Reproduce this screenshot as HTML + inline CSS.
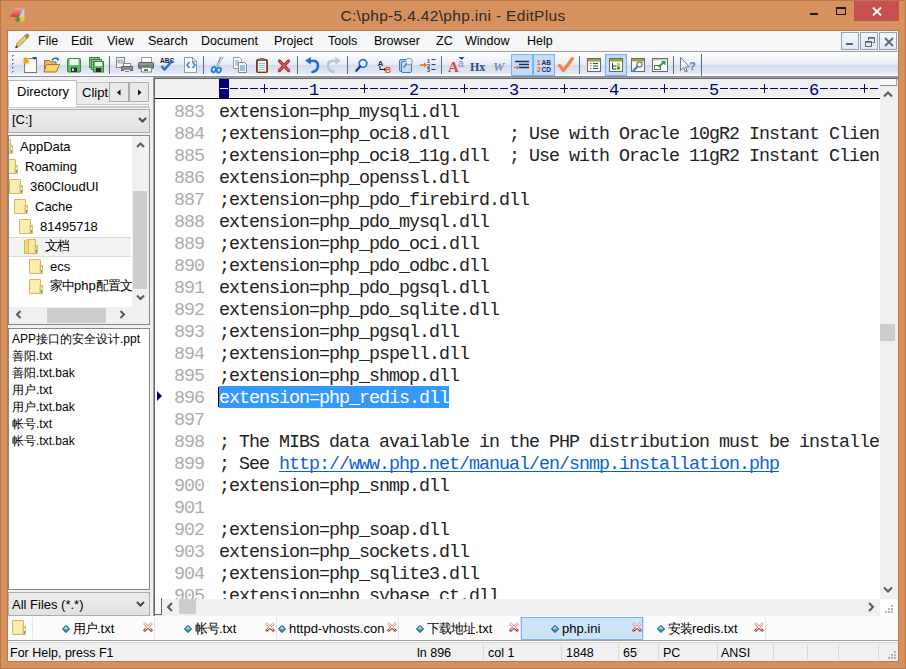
<!DOCTYPE html>
<html><head><meta charset="utf-8">
<style>
*{margin:0;padding:0;box-sizing:border-box}
html,body{width:906px;height:669px;overflow:hidden}
body{position:relative;background:#d6915f;font-family:"Liberation Sans",sans-serif;font-size:12px;color:#000}
.a{position:absolute}
#frame{left:0;top:0;width:906px;height:669px;border:1px solid #b8774a}
#title{left:0;top:1px;width:906px;height:30px;text-align:center;font-size:15.5px;letter-spacing:0.33px;line-height:30px;color:#2b2b2b}
#client{left:7px;top:30px;width:892px;height:632px;background:#f0f0f0;border:1px solid #ba7a4c}
#menubar{left:8px;top:31px;width:890px;height:21px;background:#f5f6f7;border-bottom:1px solid #a0a0a0}
.mdib{top:32px;width:18px;height:18px;background:linear-gradient(#f3f7fb,#dfe9f5);border:1px solid #8fa2b8}
.menu{top:34px;font-size:12.5px;line-height:14px;color:#000}
#toolbar{left:8px;top:52px;width:890px;height:25px;background:linear-gradient(#fdfdfe 0px,#f9fafc 3px,#e7ebf3 12.5px,#d2daeb 13px,#dfe5f3 19px,#e8ecf8 22px,#fafbfe 23px,#fff 24px);border-bottom:1px solid #868fa0}
.sep{top:55px;width:1px;height:20px;background:#a7b1c0;border-right:1px solid #fff}
.ico{top:57px;width:16px;height:16px}
.mono{font-family:"Liberation Mono",monospace}
#editor{left:150px;top:77px;width:748px;height:539px;background:#f0f0f0}
#edframe{left:153px;top:77px;width:745px;height:539px;background:#fff;border-left:1px solid #a0a0a0;border-top:1px solid #a0a0a0;box-shadow:inset 1px 1px 0 #646464}
#ruler{left:155px;top:79px;width:725px;height:20px;background:#f0f0f0;border-bottom:1px solid #000}
#lines{left:155px;top:100px;width:724px;height:499px;overflow:hidden}
.ln{position:absolute;left:0;width:724px;height:22px;line-height:22px;font-family:"Liberation Mono",monospace;font-size:18.33px;letter-spacing:-1px;white-space:pre;color:#222}
.ln span.n{position:absolute;left:19px;top:2px;color:#adadad}
.ln span.t{position:absolute;left:64px;top:2px}
.sel{background:#3399ff;color:#fff;display:inline-block;height:22px;line-height:22px;vertical-align:top;margin-top:-2px;padding-top:2px}
.lnk{color:#0a62d0;text-decoration:underline;text-decoration-skip-ink:none;text-underline-offset:2px;text-decoration-thickness:1px}
#vscroll{left:880px;top:79px;width:18px;height:520px;background:#f0f0f0}
#hscroll{left:155px;top:599px;width:725px;height:17px;background:#f0f0f0}
#leftpanel{left:8px;top:78px;width:144px;height:538px;background:#f0f0f0}
.pt{font-size:13px;line-height:15px;color:#000;white-space:nowrap}
.fl{line-height:17px}
.fold{position:absolute;width:15px;height:14px;background:linear-gradient(90deg,#f7e59a,#f0d570);border:1px solid #d8b850;border-radius:1px}
.tree{font-size:12.5px;line-height:20px;color:#000}
#tabs{left:8px;top:616px;width:890px;height:24px;background:#fcfcfc}
#status{left:8px;top:640px;width:890px;height:21px;background:#f0f0f0;border-top:1px solid #a0a0a0;box-shadow:inset 0 1px 0 #fff,inset 0 2px 0 #dadada}
.st{top:646px;font-size:12.5px;line-height:14px;white-space:nowrap}
.tsep{top:617px;width:1px;height:22px;background:#dde6f0}
.tt{top:620px;font-size:13px;line-height:17px;white-space:nowrap}
.dia{top:625px;width:8px;height:8px}
.tx{top:622px;width:10px;height:10px}
.ss{top:644px;width:1px;height:16px;background:#d9d9d9}
.cj{display:inline-block;width:12px;text-align:center;font-style:normal;overflow:hidden;vertical-align:top}
</style></head><body>
<div class="a" id="frame"></div>
<div class="a" id="title">C:\php-5.4.42\php.ini - EditPlus</div>
<div class="a" id="client"></div>
<svg class="a" style="left:9px;top:6px" width="18" height="18" viewBox="0 0 18 18">
 <defs><linearGradient id="rg" x1="0" y1="0" x2="0" y2="1"><stop offset="0" stop-color="#f4a8a4"/><stop offset="1" stop-color="#dc2c2c"/></linearGradient></defs>
 <path d="M7 1.5 L14 2.5 L10 11.5 L1 10.5 Z" fill="url(#rg)"/>
 <path d="M14 2.5 L15.5 3 L15.5 11.5 L10 11.5 Z" fill="#b8d4ea"/>
 <path d="M6 13.5h5M8.5 11v5" stroke="#28a428" stroke-width="1.8"/>
 <path d="M11 13.5h5M13.5 11v5" stroke="#e6d020" stroke-width="1.8"/>
</svg>
<div class="a" style="left:810px;top:13px;width:8px;height:2px;background:#1a1a1a"></div>
<div class="a" style="left:836px;top:7px;width:10px;height:8px;border:1px solid #1a1a1a;border-top-width:2px"></div>
<div class="a" style="left:854px;top:1px;width:45px;height:20px;background:#c75050"></div>
<svg class="a" style="left:872px;top:7px" width="10" height="9" viewBox="0 0 10 9"><path d="M1 0.5 L9 8.5 M9 0.5 L1 8.5" stroke="#fff" stroke-width="1.9"/></svg>

<div class="a" id="menubar"></div>
<svg class="a" style="left:13px;top:32px" width="18" height="18" viewBox="0 0 18 18">
 <path d="M2.5 16 L4 11.5 L13 2.5 L15.5 5 L6.5 14 Z" fill="#f2cf6a" stroke="#8a6a2a" stroke-width="0.8"/>
 <path d="M13 2.5 L14.2 1.3 L16.7 3.8 L15.5 5 Z" fill="#d85a5a"/>
 <path d="M12 3.5 L14.5 6" stroke="#3c9a4c" stroke-width="1.2"/>
 <path d="M2.5 16 L3.3 13.7 L4.8 15.2 Z" fill="#222"/>
</svg>
<div class="a mdib" style="left:841px"><div style="position:absolute;left:4px;top:10px;width:7px;height:2px;background:#5a6878"></div></div>
<div class="a mdib" style="left:860px"><svg style="position:absolute;left:4px;top:4px" width="10" height="10" viewBox="0 0 10 10"><path d="M3.5 0.5h6v5h-2M0.5 4.5h6v5h-6z M3.5 0.5v3" fill="none" stroke="#5a6878" stroke-width="1"/><path d="M3 1h6.5M0 5h7" stroke="#5a6878" stroke-width="1.5"/></svg></div>
<div class="a mdib" style="left:879px"><svg style="position:absolute;left:4px;top:4px" width="10" height="10" viewBox="0 0 10 10"><path d="M1 1L9 9M9 1L1 9" stroke="#5a6878" stroke-width="1.8"/></svg></div>

<div class="a menu" style="left:38px">File</div>
<div class="a menu" style="left:71px">Edit</div>
<div class="a menu" style="left:107px">View</div>
<div class="a menu" style="left:148px">Search</div>
<div class="a menu" style="left:201px">Document</div>
<div class="a menu" style="left:274px">Project</div>
<div class="a menu" style="left:328px">Tools</div>
<div class="a menu" style="left:374px">Browser</div>
<div class="a menu" style="left:436px">ZC</div>
<div class="a menu" style="left:465px">Window</div>
<div class="a menu" style="left:527px">Help</div>
<div class="a" id="toolbar"></div>
<svg class="a" style="left:8px;top:52px" width="890" height="25" viewBox="8 52 890 25">
<!-- gripper -->
<g fill="#7d8ca3"><rect x="12" y="55" width="2" height="2"/><rect x="12" y="59" width="2" height="2"/><rect x="12" y="63" width="2" height="2"/><rect x="12" y="67" width="2" height="2"/><rect x="12" y="71" width="2" height="2"/></g>
<g fill="#fff"><rect x="13" y="56" width="1" height="1"/><rect x="13" y="60" width="1" height="1"/><rect x="13" y="64" width="1" height="1"/><rect x="13" y="68" width="1" height="1"/><rect x="13" y="72" width="1" height="1"/></g>
<!-- separators -->
<g fill="#5f6b7b"><rect x="109" y="56" width="1" height="18"/><rect x="203" y="56" width="1" height="18"/><rect x="297" y="56" width="1" height="18"/><rect x="347" y="56" width="1" height="18"/><rect x="441" y="56" width="1" height="18"/><rect x="579" y="56" width="1" height="18"/><rect x="673" y="56" width="1" height="18"/><rect x="701" y="54" width="1" height="22"/></g>
<!-- new -->
<rect x="24.5" y="58.5" width="12" height="14" fill="#f8f8f6" stroke="#7b7b7b"/>
<path d="M32 57h5l-2.5 3z" fill="#2b4a80"/>
<circle cx="26" cy="61" r="2.6" fill="#f7a81b"/><path d="M26 56.5v9M21.5 61h9M22.8 57.8l6.4 6.4M29.2 57.8l-6.4 6.4" stroke="#f9c64a" stroke-width="1"/>
<circle cx="26" cy="61" r="2" fill="#f39c12"/>
<!-- open -->
<path d="M44.5 60.5h5l1.5 1.5h5v9.5h-11.5z" fill="#e5bd55" stroke="#8f7030"/>
<path d="M46.5 64.5h13l-3 7.5h-12.5z" fill="#f8d26a" stroke="#9a7a38"/>
<path d="M52 60.5c1-2.5 4.5-3 6.5-1" stroke="#2c6fc0" stroke-width="1.6" fill="none"/><path d="M57 57.5l2.5 2-2.5 1.5z" fill="#2c6fc0"/>
<!-- save -->
<rect x="67.5" y="58.5" width="13" height="13.5" rx="1" fill="#62b862" stroke="#3a8a3a"/>
<rect x="69.5" y="59" width="9" height="6" fill="#f2f8f0"/>
<rect x="71" y="67.5" width="6" height="4.5" fill="#2b2b2b"/><rect x="72" y="68.5" width="2" height="2.5" fill="#ddd"/>
<!-- save all -->
<rect x="89.5" y="57.5" width="10" height="10" fill="#7cc67c" stroke="#3a8a3a"/>
<rect x="91.5" y="59.5" width="10" height="10" fill="#7cc67c" stroke="#3a8a3a"/>
<rect x="93.5" y="61.5" width="10" height="10.5" fill="#62b862" stroke="#3a8a3a"/>
<rect x="95" y="62" width="7" height="4" fill="#f2f8f0"/><rect x="96" y="68" width="5" height="4" fill="#2b2b2b"/>
<!-- print preview -->
<rect x="116.5" y="57.5" width="8" height="10" fill="#f5f5f5" stroke="#888"/>
<rect x="118" y="60" width="5" height="3" fill="#bcd3ea" stroke="#777" stroke-width="0.5"/>
<rect x="123.5" y="63.5" width="7" height="4" fill="#fff" stroke="#888"/>
<rect x="121.5" y="66.5" width="11" height="4" fill="#8a8a8a" stroke="#666"/>
<rect x="124" y="70" width="6" height="2.5" fill="#eee"/><rect x="125" y="71" width="4" height="1" fill="#3a8"/>
<!-- print -->
<rect x="141.5" y="57.5" width="10" height="5" fill="#fff" stroke="#999"/>
<rect x="138.5" y="62.5" width="15" height="6" rx="1" fill="#7a7a7a" stroke="#5a5a5a"/>
<rect x="139" y="63" width="14" height="2" fill="#999"/>
<rect x="141.5" y="67.5" width="10" height="4.5" fill="#fafafa" stroke="#888"/>
<rect x="144" y="69" width="4" height="2" fill="#2e9a5e"/><rect x="151" y="64" width="1.5" height="1.5" fill="#4c4"/>
<!-- spell ABC -->
<text x="160" y="62.5" font-family="Liberation Sans" font-size="6.5" font-weight="bold" fill="#222">ABC</text>
<path d="M161.5 66l3 3.5 8-9" stroke="#2a6fd0" stroke-width="2.6" fill="none" stroke-linejoin="round"/>
<!-- html -->
<path d="M184.5 57.5h8l4 4v11h-12z" fill="#fbfbfb" stroke="#999"/>
<path d="M192.5 57.5v4h4" fill="none" stroke="#999"/>
<path d="M189.5 62l-2.5 3 2.5 3M192.5 62l2.5 3-2.5 3" stroke="#2f8fe0" stroke-width="1.7" fill="none"/>
<!-- cut -->
<path d="M223 57.5l-6 8.5M220.5 57l-3.5 9" stroke="#8794a2" stroke-width="1.3"/>
<path d="M222 58.5l-4.5 6.5" stroke="#d8dee6" stroke-width="0.8"/>
<ellipse cx="213.8" cy="69.5" rx="2" ry="2.8" fill="none" stroke="#1f80dc" stroke-width="1.8" transform="rotate(20 213.8 69.5)"/>
<ellipse cx="218.8" cy="70" rx="2" ry="2.6" fill="none" stroke="#1f80dc" stroke-width="1.8" transform="rotate(20 218.8 70)"/>
<!-- copy -->
<path d="M233.5 57.5h6l2 2v9h-8z" fill="#fafafa" stroke="#999"/>
<path d="M235 61h4M235 63h4M235 65h4" stroke="#6b9bd0"/>
<path d="M238.5 62.5h6l2 2v8h-8z" fill="#fafafa" stroke="#888"/>
<path d="M240 66h5M240 68h5M240 70h5" stroke="#3c7fd0"/>
<!-- paste -->
<rect x="256.5" y="59.5" width="11" height="13" rx="1" fill="#8b5a2b" stroke="#6a4220"/>
<rect x="258" y="61" width="8" height="10.5" fill="#f5f8fb"/>
<path d="M259 63.5h6M259 65.5h6M259 67.5h6M259 69.5h6" stroke="#8fb6de"/>
<rect x="259.5" y="58" width="5" height="2.5" fill="#777"/>
<!-- delete -->
<path d="M279.5 61l9 9.5M288.5 61l-9 9.5" stroke="#8e1a1a" stroke-width="3.2" stroke-linecap="round"/>
<path d="M279.5 61l9 9.5M288.5 61l-9 9.5" stroke="#e05555" stroke-width="1.8" stroke-linecap="round"/>
<!-- undo -->
<path d="M309.5 61.5c5-2 8.5 0 8.5 4s-3 6-5.5 6.5" stroke="#1b72cf" stroke-width="2.6" fill="none" stroke-linecap="round"/>
<path d="M305 60.5l6-3.5-0.5 7.5z" fill="#1b72cf"/>
<!-- redo -->
<path d="M336.5 61.5c-5-2-8.5 0-8.5 4s3 6 5.5 6.5" stroke="#b9c7d3" stroke-width="2.6" fill="none" stroke-linecap="round"/>
<path d="M341 60.5l-6-3.5 0.5 7.5z" fill="#b9c7d3"/>
<!-- find -->
<circle cx="363" cy="63.5" r="3.8" fill="#eaf4fc" stroke="#2775d0" stroke-width="1.8"/>
<path d="M360.3 66.3l-4 4.5" stroke="#1a3c7a" stroke-width="2.2" stroke-linecap="round"/>
<!-- replace -->
<text x="377.5" y="65.5" font-family="Liberation Sans" font-size="8" font-weight="bold" fill="#1a2f6a">A</text>
<path d="M380 66v3.5h4.5" stroke="#111" stroke-width="1" fill="none"/><path d="M384 68l2 1.5-2 1.5z" fill="#111"/>
<text x="385" y="72.5" font-family="Liberation Sans" font-size="8.5" font-weight="bold" fill="#f04e10">B</text>
<!-- find in files -->
<rect x="399.5" y="59.5" width="10" height="12" rx="1.5" fill="#a8cdf0" stroke="#3a7bc8"/>
<rect x="401.5" y="61.5" width="10" height="11" rx="1.5" fill="#c4ddf5" stroke="#3a7bc8"/>
<circle cx="409" cy="61.5" r="3.3" fill="#eef6fd" stroke="#8a9aaa" stroke-width="1"/>
<path d="M406.5 64l-3 3.5" stroke="#777" stroke-width="1.6"/>
<!-- goto -->
<path d="M420 65h5" stroke="#ee6a25" stroke-width="1.6"/><path d="M424 62.5l3 2.5-3 2.5z" fill="#ee6a25"/>
<text x="427" y="63" font-family="Liberation Sans" font-size="5.5" font-weight="bold" fill="#243c8a">1</text>
<text x="427" y="67.5" font-family="Liberation Sans" font-size="5.5" font-weight="bold" fill="#243c8a">2</text>
<text x="427" y="72" font-family="Liberation Sans" font-size="5.5" font-weight="bold" fill="#243c8a">3</text>
<path d="M431.5 59.5h4M431.5 64.5h4M431.5 69.5h4" stroke="#243c8a" stroke-width="1.2"/>
<!-- font -->
<text x="448" y="72" font-family="Liberation Serif" font-size="15" font-weight="bold" fill="#d24a4a">A</text>
<text x="458" y="67" font-family="Liberation Sans" font-size="10" fill="#8a7ad0">a</text>
<path d="M458.5 57h6l-3 3z" fill="#3a4a6a"/>
<!-- Hx -->
<text x="470" y="71" font-family="Liberation Serif" font-size="12" font-weight="bold" fill="#2f4a7a">Hx</text>
<!-- W -->
<text x="493" y="71" font-family="Liberation Serif" font-size="13" font-weight="bold" font-style="italic" fill="#7e90a8">W</text>
<!-- pressed buttons -->
<rect x="511.5" y="54.5" width="21" height="21" fill="#c4dcf6" stroke="#7fb2ea"/>
<rect x="533.5" y="54.5" width="21" height="21" fill="#c4dcf6" stroke="#7fb2ea"/>
<path d="M515 61.5h14M519 64.5h10M519 67.5h10" stroke="#1e2f5a" stroke-width="1.3"/>
<path d="M514 67.5h4" stroke="#ee6a25" stroke-width="1.3"/><path d="M517 65.5l2.5 2-2.5 2z" fill="#ee6a25"/>
<text x="537" y="64.5" font-family="Liberation Sans" font-size="6.5" font-weight="bold" fill="#f05a20">1</text>
<text x="537" y="72" font-family="Liberation Sans" font-size="6.5" font-weight="bold" fill="#f05a20">2</text>
<text x="541.5" y="64.5" font-family="Liberation Sans" font-size="6.5" font-weight="bold" fill="#1e2f5a">AB</text>
<text x="541.5" y="72" font-family="Liberation Sans" font-size="6.5" font-weight="bold" fill="#1e2f5a">CD</text>
<!-- check -->
<path d="M559.5 65.5l4 5 9-12" stroke="#f0823a" stroke-width="3" fill="none" stroke-linecap="round" stroke-linejoin="round"/>
<!-- window icons -->
<rect x="587.5" y="58.5" width="13" height="13" fill="#fbfbfb" stroke="#6a6a6a"/><rect x="588" y="59" width="12" height="2.5" fill="#9aa53a"/>
<path d="M590 63.5h1.5M590 66h1.5M590 68.5h1.5" stroke="#e04a2a" stroke-width="1.2"/><path d="M593 63.5h5M593 66h5M593 68.5h5" stroke="#3a4a6a" stroke-width="1"/>
<rect x="605.5" y="54.5" width="21" height="21" fill="#c4dcf6" stroke="#7fb2ea"/>
<rect x="609.5" y="58.5" width="13" height="13" fill="#fbfbfb" stroke="#6a6a6a"/><rect x="610" y="59" width="12" height="2.5" fill="#9aa53a"/>
<path d="M612.5 63v6h4M612.5 66h4" stroke="#333" fill="none"/><rect x="617" y="63" width="3" height="3" fill="#d8d020"/><rect x="617" y="66.5" width="3" height="3" fill="#2aa04a"/>
<rect x="631.5" y="58.5" width="13" height="13" fill="#fbfbfb" stroke="#6a6a6a"/><rect x="632" y="59" width="12" height="2.5" fill="#9aa53a"/>
<path d="M633 71l5-5" stroke="#3b82d8" stroke-width="2.4"/><circle cx="639.5" cy="64.5" r="2.5" fill="none" stroke="#888" stroke-width="1.5"/>
<rect x="652.5" y="58.5" width="15" height="13" fill="#fbfbfb" stroke="#6a6a6a"/><rect x="653" y="59" width="14" height="1.5" fill="#c8c8c8"/>
<rect x="654.5" y="65.5" width="6" height="4" fill="none" stroke="#666"/>
<path d="M658.5 67l5.5-5" stroke="#22a04a" stroke-width="2"/><path d="M661 61h4.5v4.5z" fill="#22a04a"/>
<!-- help -->
<path d="M680.5 57.5v13l3-3 2 4.5 1.8-.8-2-4.3h4z" fill="#f4f6f8" stroke="#6e7a88"/>
<text x="689" y="70" font-family="Liberation Sans" font-size="11" font-weight="bold" fill="#4a7ac8">?</text>
</svg>

<div class="a" id="leftpanel"></div>
<div class="a" style="left:8px;top:80px;width:69px;height:27px;background:#fff;border:1px solid #b9b9b9;border-bottom:none"></div>
<div class="a pt" style="left:17px;top:84px;">Directory</div>
<div class="a" style="left:76px;top:82px;width:33px;height:23px;background:#ebebeb;border-top:1px solid #c4c4c4;border-left:1px solid #c4c4c4;overflow:hidden"><div class="pt" style="position:absolute;left:5px;top:2px">Clipt<span style="color:#aaa">e</span></div></div>
<div class="a" style="left:109px;top:82px;width:20px;height:20px;background:#e8e8e8;border:1px solid #adadad"><svg style="position:absolute;left:6px;top:6px" width="6" height="7"><path d="M4.5 0.5 L1 3.5 L4.5 6.5Z" fill="#111"/></svg></div>
<div class="a" style="left:129px;top:82px;width:20px;height:20px;background:#e8e8e8;border:1px solid #adadad"><svg style="position:absolute;left:7px;top:6px" width="6" height="7"><path d="M1 0.5 L4.5 3.5 L1 6.5Z" fill="#111"/></svg></div>
<div class="a" style="left:76px;top:104px;width:73px;height:3px;border:1px solid #c8c8c8;border-left:none;background:#fafafa"></div>
<div class="a" style="left:8px;top:107px;width:142px;height:1px;background:#d0d0d0"></div>
<div class="a" style="left:8px;top:109px;width:142px;height:24px;background:linear-gradient(#ececec,#e2e2e2);border:1px solid #adadad"></div>
<div class="a pt" style="left:12px;top:112px">[C:]</div>
<svg class="a" style="left:138px;top:117px" width="9" height="6"><path d="M1 1 L4.5 4.5 L8 1" fill="none" stroke="#4a4a4a" stroke-width="2"/></svg>
<div class="a" style="left:8px;top:135px;width:142px;height:190px;background:#fff;border:1px solid #828790"></div>
<div class="a" style="left:132px;top:136px;width:17px;height:188px;background:#f0f0f0"></div>
<div class="a" style="left:133px;top:191px;width:14px;height:98px;background:#cdcdcd"></div>
<svg class="a" style="left:136px;top:142px" width="9" height="6"><path d="M1 5 L4.5 1.5 L8 5" fill="none" stroke="#5a5a5a" stroke-width="2"/></svg>
<svg class="a" style="left:136px;top:294px" width="9" height="7"><path d="M1 1.5 L4.5 5 L8 1.5" fill="none" stroke="#5a5a5a" stroke-width="2"/></svg>
<div class="a" style="left:9px;top:307px;width:123px;height:17px;background:#f0f0f0"></div>
<div class="a" style="left:47px;top:308px;width:59px;height:15px;background:#cdcdcd"></div>
<svg class="a" style="left:15px;top:310px" width="7" height="9"><path d="M5.5 1 L2 4.5 L5.5 8" fill="none" stroke="#5a5a5a" stroke-width="2"/></svg>
<svg class="a" style="left:119px;top:310px" width="7" height="9"><path d="M1.5 1 L5 4.5 L1.5 8" fill="none" stroke="#5a5a5a" stroke-width="2"/></svg>
<div class="a" style="left:9px;top:237px;width:122px;height:20px;background:#f3f3f3;border-top:1px solid #dcdcdc;border-bottom:1px solid #dcdcdc"></div>
<div class="a" style="left:9px;top:136px;width:123px;height:171px;overflow:hidden">
 <svg class="a" style="left:-10px;top:3px" width="14" height="15" viewBox="0 0 14 15"><rect x="0.5" y="0.5" width="11" height="14" rx="0.5" fill="#f8e8a2" stroke="#d9b65c"/><rect x="1.5" y="1.5" width="9" height="12" fill="#f9eeb0"/><rect x="11" y="6.5" width="2.5" height="8" fill="#ecc860" stroke="#d9b65c" stroke-width="0.8"/><rect x="12" y="8.5" width="1" height="2.5" fill="#fff"/><rect x="12" y="11" width="1" height="2.5" fill="#3596e0"/></svg><div class="a pt" style="left:11px;top:3px">AppData</div>
 <svg class="a" style="left:-5px;top:23px" width="14" height="15" viewBox="0 0 14 15"><rect x="0.5" y="0.5" width="11" height="14" rx="0.5" fill="#f8e8a2" stroke="#d9b65c"/><rect x="1.5" y="1.5" width="9" height="12" fill="#f9eeb0"/><rect x="11" y="6.5" width="2.5" height="8" fill="#ecc860" stroke="#d9b65c" stroke-width="0.8"/><rect x="12" y="8.5" width="1" height="2.5" fill="#fff"/><rect x="12" y="11" width="1" height="2.5" fill="#3596e0"/></svg><div class="a pt" style="left:16px;top:23px">Roaming</div>
 <svg class="a" style="left:0px;top:43px" width="14" height="15" viewBox="0 0 14 15"><rect x="0.5" y="0.5" width="11" height="14" rx="0.5" fill="#f8e8a2" stroke="#d9b65c"/><rect x="1.5" y="1.5" width="9" height="12" fill="#f9eeb0"/><rect x="11" y="6.5" width="2.5" height="8" fill="#ecc860" stroke="#d9b65c" stroke-width="0.8"/><rect x="12" y="8.5" width="1" height="2.5" fill="#fff"/><rect x="12" y="11" width="1" height="2.5" fill="#3596e0"/></svg><div class="a pt" style="left:21px;top:43px">360CloudUI</div>
 <svg class="a" style="left:5px;top:63px" width="14" height="15" viewBox="0 0 14 15"><rect x="0.5" y="0.5" width="11" height="14" rx="0.5" fill="#f8e8a2" stroke="#d9b65c"/><rect x="1.5" y="1.5" width="9" height="12" fill="#f9eeb0"/><rect x="11" y="6.5" width="2.5" height="8" fill="#ecc860" stroke="#d9b65c" stroke-width="0.8"/><rect x="12" y="8.5" width="1" height="2.5" fill="#fff"/><rect x="12" y="11" width="1" height="2.5" fill="#3596e0"/></svg><div class="a pt" style="left:26px;top:63px">Cache</div>
 <svg class="a" style="left:10px;top:83px" width="14" height="15" viewBox="0 0 14 15"><rect x="0.5" y="0.5" width="11" height="14" rx="0.5" fill="#f8e8a2" stroke="#d9b65c"/><rect x="1.5" y="1.5" width="9" height="12" fill="#f9eeb0"/><rect x="11" y="6.5" width="2.5" height="8" fill="#ecc860" stroke="#d9b65c" stroke-width="0.8"/><rect x="12" y="8.5" width="1" height="2.5" fill="#fff"/><rect x="12" y="11" width="1" height="2.5" fill="#3596e0"/></svg><div class="a pt" style="left:31px;top:83px">81495718</div>
 <svg class="a" style="left:15px;top:103px" width="14" height="15" viewBox="0 0 14 15"><path d="M0.5 1.5 L5.5 0.5 V14.5 H0.5Z" fill="#f3dc80" stroke="#d9b65c"/><rect x="4.5" y="0.5" width="7" height="14" fill="#f8e8a2" stroke="#d9b65c"/><rect x="11" y="6.5" width="2.5" height="8" fill="#ecc860" stroke="#d9b65c" stroke-width="0.8"/><rect x="12" y="11" width="1" height="2.5" fill="#3596e0"/></svg><div class="a pt" style="left:36px;top:102px"><i class="cj">文</i><i class="cj">档</i></div>
 <svg class="a" style="left:20px;top:123px" width="14" height="15" viewBox="0 0 14 15"><rect x="0.5" y="0.5" width="11" height="14" rx="0.5" fill="#f8e8a2" stroke="#d9b65c"/><rect x="1.5" y="1.5" width="9" height="12" fill="#f9eeb0"/><rect x="11" y="6.5" width="2.5" height="8" fill="#ecc860" stroke="#d9b65c" stroke-width="0.8"/><rect x="12" y="8.5" width="1" height="2.5" fill="#fff"/><rect x="12" y="11" width="1" height="2.5" fill="#3596e0"/></svg><div class="a pt" style="left:41px;top:123px">ecs</div>
 <svg class="a" style="left:20px;top:143px" width="14" height="15" viewBox="0 0 14 15"><rect x="0.5" y="0.5" width="11" height="14" rx="0.5" fill="#f8e8a2" stroke="#d9b65c"/><rect x="1.5" y="1.5" width="9" height="12" fill="#f9eeb0"/><rect x="11" y="6.5" width="2.5" height="8" fill="#ecc860" stroke="#d9b65c" stroke-width="0.8"/><rect x="12" y="8.5" width="1" height="2.5" fill="#fff"/><rect x="12" y="11" width="1" height="2.5" fill="#3596e0"/></svg><div class="a pt" style="left:41px;top:142px;white-space:nowrap"><i class="cj">家</i><i class="cj">中</i>php<i class="cj">配</i><i class="cj">置</i><i class="cj">文</i><i class="cj">件</i></div>
</div>
<div class="a" style="left:8px;top:328px;width:142px;height:262px;background:#fff;border:1px solid #828790"></div>
<div class="a pt fl" style="left:12px;top:331px;font-size:12px">APP<i class="cj">接</i><i class="cj">口</i><i class="cj">的</i><i class="cj">安</i><i class="cj">全</i><i class="cj">设</i><i class="cj">计</i>.ppt<br><i class="cj">善</i><i class="cj">阳</i>.txt<br><i class="cj">善</i><i class="cj">阳</i>.txt.bak<br><i class="cj">用</i><i class="cj">户</i>.txt<br><i class="cj">用</i><i class="cj">户</i>.txt.bak<br><i class="cj">帐</i><i class="cj">号</i>.txt<br><i class="cj">帐</i><i class="cj">号</i>.txt.bak</div>
<div class="a" style="left:8px;top:592px;width:142px;height:24px;background:linear-gradient(#ececec,#e2e2e2);border:1px solid #adadad"></div>
<div class="a pt" style="left:12px;top:597px">All Files (*.*)</div>
<svg class="a" style="left:136px;top:601px" width="9" height="6"><path d="M1 1 L4.5 4.5 L8 1" fill="none" stroke="#4a4a4a" stroke-width="2"/></svg>

<div class="a" id="editor"></div><div class="a" id="edframe"></div>
<div class="a" id="ruler"></div><svg class="a" style="left:155px;top:79px" width="725" height="19" viewBox="155 79 725 19"><rect x="155" y="97" width="725" height="1" fill="#fff"/><rect x="219" y="79" width="10" height="19" fill="#000080"/><rect x="220" y="88" width="8" height="1" fill="#fff"/><path d="M230 88.5h8M240 88.5h8M250 88.5h8M260 88.5h8M264.5 84v9M270 88.5h8M280 88.5h8M290 88.5h8M300 88.5h8M320 88.5h8M330 88.5h8M340 88.5h8M350 88.5h8M360 88.5h8M364.5 84v9M370 88.5h8M380 88.5h8M390 88.5h8M400 88.5h8M420 88.5h8M430 88.5h8M440 88.5h8M450 88.5h8M460 88.5h8M464.5 84v9M470 88.5h8M480 88.5h8M490 88.5h8M500 88.5h8M520 88.5h8M530 88.5h8M540 88.5h8M550 88.5h8M560 88.5h8M564.5 84v9M570 88.5h8M580 88.5h8M590 88.5h8M600 88.5h8M620 88.5h8M630 88.5h8M640 88.5h8M650 88.5h8M660 88.5h8M664.5 84v9M670 88.5h8M680 88.5h8M690 88.5h8M700 88.5h8M720 88.5h8M730 88.5h8M740 88.5h8M750 88.5h8M760 88.5h8M764.5 84v9M770 88.5h8M780 88.5h8M790 88.5h8M800 88.5h8M820 88.5h8M830 88.5h8M840 88.5h8M850 88.5h8M860 88.5h8M864.5 84v9M870 88.5h8M880 88.5h8" stroke="#000080" stroke-width="1" fill="none" shape-rendering="crispEdges"/><text x="314" y="95" font-family="Liberation Mono" font-size="17" fill="#000080" text-anchor="middle">1</text><text x="414" y="95" font-family="Liberation Mono" font-size="17" fill="#000080" text-anchor="middle">2</text><text x="514" y="95" font-family="Liberation Mono" font-size="17" fill="#000080" text-anchor="middle">3</text><text x="614" y="95" font-family="Liberation Mono" font-size="17" fill="#000080" text-anchor="middle">4</text><text x="714" y="95" font-family="Liberation Mono" font-size="17" fill="#000080" text-anchor="middle">5</text><text x="814" y="95" font-family="Liberation Mono" font-size="17" fill="#000080" text-anchor="middle">6</text></svg>
<div class="a" id="lines">
<div class="ln" style="top:0px"><span class="n">883</span><span class="t">extension=php_mysqli.dll</span></div>
<div class="ln" style="top:22px"><span class="n">884</span><span class="t">;extension=php_oci8.dll      ; Use with Oracle 10gR2 Instant Client</span></div>
<div class="ln" style="top:44px"><span class="n">885</span><span class="t">;extension=php_oci8_11g.dll  ; Use with Oracle 11gR2 Instant Client</span></div>
<div class="ln" style="top:66px"><span class="n">886</span><span class="t">extension=php_openssl.dll</span></div>
<div class="ln" style="top:88px"><span class="n">887</span><span class="t">;extension=php_pdo_firebird.dll</span></div>
<div class="ln" style="top:110px"><span class="n">888</span><span class="t">extension=php_pdo_mysql.dll</span></div>
<div class="ln" style="top:132px"><span class="n">889</span><span class="t">;extension=php_pdo_oci.dll</span></div>
<div class="ln" style="top:154px"><span class="n">890</span><span class="t">;extension=php_pdo_odbc.dll</span></div>
<div class="ln" style="top:176px"><span class="n">891</span><span class="t">extension=php_pdo_pgsql.dll</span></div>
<div class="ln" style="top:198px"><span class="n">892</span><span class="t">extension=php_pdo_sqlite.dll</span></div>
<div class="ln" style="top:220px"><span class="n">893</span><span class="t">;extension=php_pgsql.dll</span></div>
<div class="ln" style="top:242px"><span class="n">894</span><span class="t">;extension=php_pspell.dll</span></div>
<div class="ln" style="top:264px"><span class="n">895</span><span class="t">;extension=php_shmop.dll</span></div>
<div class="ln" style="top:286px"><span class="n">896</span><span class="t"><span class="sel">extension=php_redis.dll</span></span></div>
<div class="ln" style="top:308px"><span class="n">897</span><span class="t"></span></div>
<div class="ln" style="top:330px"><span class="n">898</span><span class="t">; The MIBS data available in the PHP distribution must be installed.</span></div>
<div class="ln" style="top:352px"><span class="n">899</span><span class="t">; See <span class="lnk">http://www.php.net/manual/en/snmp.installation.php</span></span></div>
<div class="ln" style="top:374px"><span class="n">900</span><span class="t">;extension=php_snmp.dll</span></div>
<div class="ln" style="top:396px"><span class="n">901</span><span class="t"></span></div>
<div class="ln" style="top:418px"><span class="n">902</span><span class="t">;extension=php_soap.dll</span></div>
<div class="ln" style="top:440px"><span class="n">903</span><span class="t">extension=php_sockets.dll</span></div>
<div class="ln" style="top:462px"><span class="n">904</span><span class="t">;extension=php_sqlite3.dll</span></div>
<div class="ln" style="top:484px"><span class="n">905</span><span class="t">;extension=php_sybase_ct.dll</span></div>
</div>
<div class="a" id="vscroll"></div>
<div class="a" id="hscroll"></div>
<div class="a" style="left:880px;top:79px;width:17px;height:7px;background:#f8f8f8;border-right:1px solid #a0a0a0;border-bottom:1px solid #8a8a8a"></div>
<svg class="a" style="left:883px;top:91px" width="10" height="7"><path d="M1 5.5 L5 1.5 L9 5.5" fill="none" stroke="#5a5a5a" stroke-width="2"/></svg>
<div class="a" style="left:880px;top:324px;width:15px;height:17px;background:#cdcdcd"></div>
<svg class="a" style="left:883px;top:586px" width="10" height="7"><path d="M1 1.5 L5 5.5 L9 1.5" fill="none" stroke="#5a5a5a" stroke-width="2"/></svg>
<div class="a" style="left:155px;top:598px;width:7px;height:17px;background:#fafafa;border-right:1px solid #696969;border-bottom:1px solid #696969"></div>
<svg class="a" style="left:166px;top:602px" width="8" height="10"><path d="M6 1 L2 5 L6 9" fill="none" stroke="#5a5a5a" stroke-width="2"/></svg>
<div class="a" style="left:179px;top:599px;width:17px;height:15px;background:#cdcdcd"></div>
<svg class="a" style="left:867px;top:602px" width="8" height="10"><path d="M2 1 L6 5 L2 9" fill="none" stroke="#5a5a5a" stroke-width="2"/></svg>
<svg class="a" style="left:885px;top:604px" width="12" height="12"><g fill="#b5b5b5"><rect x="6" y="1" width="2" height="2"/><rect x="3" y="4" width="2" height="2"/><rect x="6" y="4" width="2" height="2"/><rect x="0" y="7" width="2" height="2"/><rect x="3" y="7" width="2" height="2"/><rect x="6" y="7" width="2" height="2"/></g></svg>
<svg class="a" style="left:157px;top:391px" width="6" height="11"><path d="M0 0 L5 5 L0 10Z" fill="#000080"/></svg>
<div class="a" style="left:218px;top:387px;width:1px;height:20px;background:#000"></div>

<div class="a" id="tabs"></div>
<svg class="a" style="left:12px;top:620px" width="14" height="15" viewBox="0 0 14 15"><rect x="0.5" y="0.5" width="11" height="14" rx="0.5" fill="#f8e8a2" stroke="#d9b65c"/><rect x="1.5" y="1.5" width="9" height="12" fill="#f9eeb0"/><rect x="11" y="6.5" width="2.5" height="8" fill="#ecc860" stroke="#d9b65c" stroke-width="0.8"/><rect x="12" y="8.5" width="1" height="2.5" fill="#fff"/><rect x="12" y="11" width="1" height="2.5" fill="#3596e0"/></svg>
<div class="a tsep" style="left:32px"></div>
<div class="a" style="left:521px;top:617px;width:122px;height:23px;background:#cce4f7;border:1px solid #7eb4ea"></div>
<svg class="a dia" style="left:62px" width="9" height="9" viewBox="0 0 9 9"><path d="M4.5 0.5 L8.5 4.5 L4.5 8.5 L0.5 4.5Z" fill="#3aa0c8" stroke="#142a4a" stroke-width="1"/><path d="M4.5 1.8 L7.2 4.5 L1.8 4.5Z" fill="#a8e0f2"/></svg>
<div class="a tt" style="left:73px"><i class="cj">用</i><i class="cj">户</i>.txt</div>
<svg class="a tx" style="left:143px" width="10" height="10" viewBox="0 0 10 10"><defs><linearGradient id="xg" x1="0" y1="0" x2="0" y2="1"><stop offset="0" stop-color="#e8b4b4"/><stop offset="0.6" stop-color="#d88888"/><stop offset="1" stop-color="#a82424"/></linearGradient></defs><path d="M1.8 1.8 L8.2 8.2 M8.2 1.8 L1.8 8.2" stroke="url(#xg)" stroke-width="2.8" stroke-linecap="round"/><path d="M1.8 1.8 L8.2 8.2 M8.2 1.8 L1.8 8.2" stroke="#fff" stroke-width="0.9" stroke-linecap="round"/></svg>
<div class="a tsep" style="left:154px"></div>
<svg class="a dia" style="left:184px" width="9" height="9" viewBox="0 0 9 9"><path d="M4.5 0.5 L8.5 4.5 L4.5 8.5 L0.5 4.5Z" fill="#3aa0c8" stroke="#142a4a" stroke-width="1"/><path d="M4.5 1.8 L7.2 4.5 L1.8 4.5Z" fill="#a8e0f2"/></svg>
<div class="a tt" style="left:195px"><i class="cj">帐</i><i class="cj">号</i>.txt</div>
<svg class="a tx" style="left:265px" width="10" height="10" viewBox="0 0 10 10"><path d="M1.8 1.8 L8.2 8.2 M8.2 1.8 L1.8 8.2" stroke="url(#xg)" stroke-width="2.8" stroke-linecap="round"/><path d="M1.8 1.8 L8.2 8.2 M8.2 1.8 L1.8 8.2" stroke="#fff" stroke-width="0.9" stroke-linecap="round"/></svg>
<div class="a tsep" style="left:276px"></div>
<svg class="a dia" style="left:278px" width="9" height="9" viewBox="0 0 9 9"><path d="M4.5 0.5 L8.5 4.5 L4.5 8.5 L0.5 4.5Z" fill="#3aa0c8" stroke="#142a4a" stroke-width="1"/><path d="M4.5 1.8 L7.2 4.5 L1.8 4.5Z" fill="#a8e0f2"/></svg>
<div class="a tt" style="left:289px">httpd-vhosts.con</div>
<svg class="a tx" style="left:387px" width="10" height="10" viewBox="0 0 10 10"><path d="M1.8 1.8 L8.2 8.2 M8.2 1.8 L1.8 8.2" stroke="url(#xg)" stroke-width="2.8" stroke-linecap="round"/><path d="M1.8 1.8 L8.2 8.2 M8.2 1.8 L1.8 8.2" stroke="#fff" stroke-width="0.9" stroke-linecap="round"/></svg>
<div class="a tsep" style="left:398px"></div>
<svg class="a dia" style="left:416px" width="9" height="9" viewBox="0 0 9 9"><path d="M4.5 0.5 L8.5 4.5 L4.5 8.5 L0.5 4.5Z" fill="#3aa0c8" stroke="#142a4a" stroke-width="1"/><path d="M4.5 1.8 L7.2 4.5 L1.8 4.5Z" fill="#a8e0f2"/></svg>
<div class="a tt" style="left:427px"><i class="cj">下</i><i class="cj">载</i><i class="cj">地</i><i class="cj">址</i>.txt</div>
<svg class="a tx" style="left:509px" width="10" height="10" viewBox="0 0 10 10"><path d="M1.8 1.8 L8.2 8.2 M8.2 1.8 L1.8 8.2" stroke="url(#xg)" stroke-width="2.8" stroke-linecap="round"/><path d="M1.8 1.8 L8.2 8.2 M8.2 1.8 L1.8 8.2" stroke="#fff" stroke-width="0.9" stroke-linecap="round"/></svg>
<div class="a tsep" style="left:520px"></div>
<svg class="a dia" style="left:551px" width="9" height="9" viewBox="0 0 9 9"><path d="M4.5 0.5 L8.5 4.5 L4.5 8.5 L0.5 4.5Z" fill="#3aa0c8" stroke="#142a4a" stroke-width="1"/><path d="M4.5 1.8 L7.2 4.5 L1.8 4.5Z" fill="#a8e0f2"/></svg>
<div class="a tt" style="left:562px">php.ini</div>
<svg class="a tx" style="left:632px" width="10" height="10" viewBox="0 0 10 10"><path d="M1.8 1.8 L8.2 8.2 M8.2 1.8 L1.8 8.2" stroke="url(#xg)" stroke-width="2.8" stroke-linecap="round"/><path d="M1.8 1.8 L8.2 8.2 M8.2 1.8 L1.8 8.2" stroke="#fff" stroke-width="0.9" stroke-linecap="round"/></svg>
<div class="a tsep" style="left:643px"></div>
<svg class="a dia" style="left:657px" width="9" height="9" viewBox="0 0 9 9"><path d="M4.5 0.5 L8.5 4.5 L4.5 8.5 L0.5 4.5Z" fill="#3aa0c8" stroke="#142a4a" stroke-width="1"/><path d="M4.5 1.8 L7.2 4.5 L1.8 4.5Z" fill="#a8e0f2"/></svg>
<div class="a tt" style="left:668px"><i class="cj">安</i><i class="cj">装</i>redis.txt</div>
<svg class="a tx" style="left:754px" width="10" height="10" viewBox="0 0 10 10"><path d="M1.8 1.8 L8.2 8.2 M8.2 1.8 L1.8 8.2" stroke="url(#xg)" stroke-width="2.8" stroke-linecap="round"/><path d="M1.8 1.8 L8.2 8.2 M8.2 1.8 L1.8 8.2" stroke="#fff" stroke-width="0.9" stroke-linecap="round"/></svg>
<div class="a tsep" style="left:765px"></div>
<div class="a" id="status"></div>
<div class="a st" style="left:10px">For Help, press F1</div>
<div class="a ss" style="left:483px"></div>
<div class="a ss" style="left:561px"></div>
<div class="a ss" style="left:618px"></div>
<div class="a ss" style="left:658px"></div>
<div class="a ss" style="left:717px"></div>
<div class="a ss" style="left:773px"></div>
<div class="a ss" style="left:807px"></div>
<div class="a ss" style="left:838px"></div>
<div class="a ss" style="left:878px"></div>
<div class="a st" style="left:417px">ln 896</div>
<div class="a st" style="left:488px">col 1</div>
<div class="a st" style="left:566px">1848</div>
<div class="a st" style="left:623px">65</div>
<div class="a st" style="left:663px">PC</div>
<div class="a st" style="left:721px">ANSI</div>
<svg class="a" style="left:888px;top:650px" width="12" height="12"><g fill="#b5b5b5"><rect x="6" y="1" width="2" height="2"/><rect x="3" y="4" width="2" height="2"/><rect x="6" y="4" width="2" height="2"/><rect x="0" y="7" width="2" height="2"/><rect x="3" y="7" width="2" height="2"/><rect x="6" y="7" width="2" height="2"/></g></svg>
</body></html>
